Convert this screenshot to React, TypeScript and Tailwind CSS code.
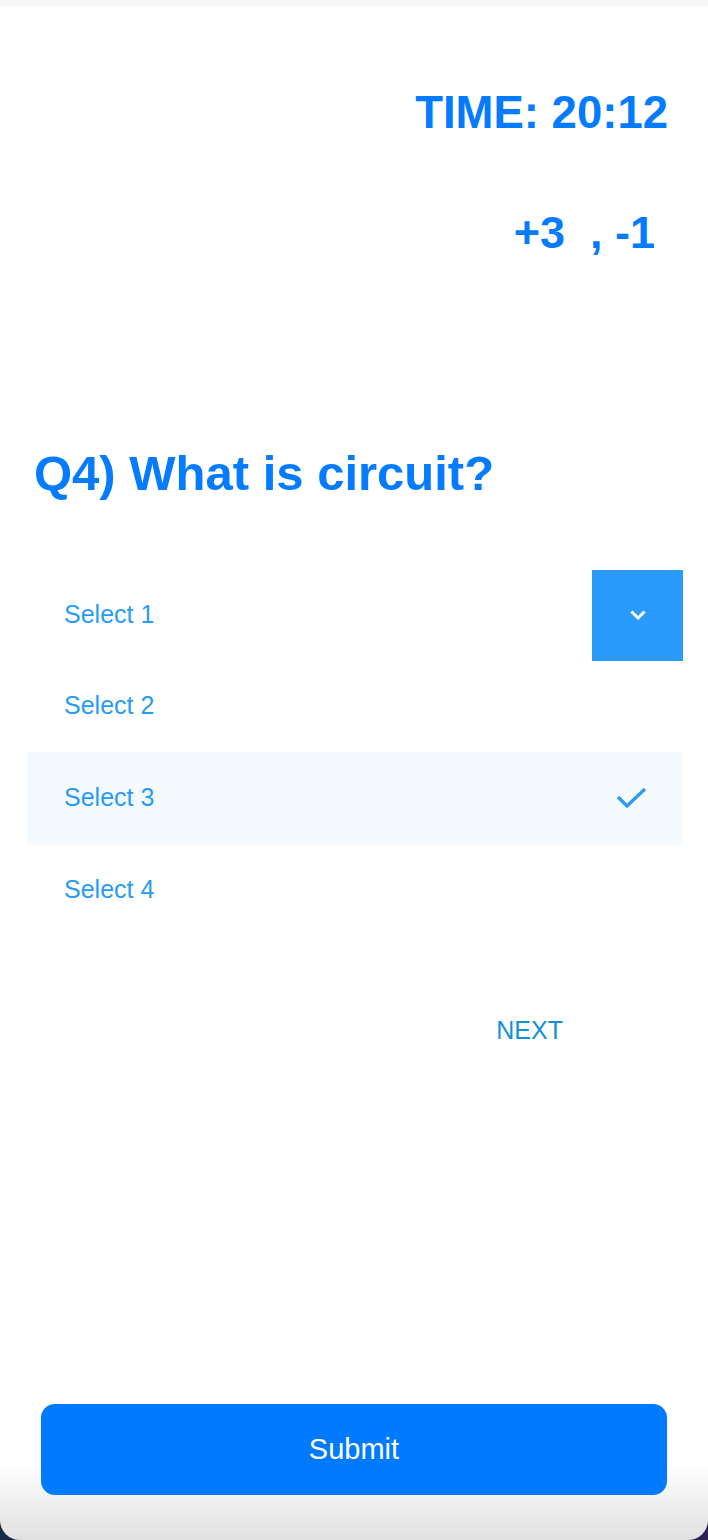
const options = ['Select 1', 'Select 2', 'Select 3', 'Select 4'];

function Chevron() {
  return (
    <svg width="16" height="12" viewBox="0 0 16 12" fill="none">
      <path d="M2.5 3.5 L8 9 L13.5 3.5" stroke="white" strokeWidth="3" strokeLinecap="square" />
    </svg>
  );
}

function Check() {
  return (
    <svg width="34" height="26" viewBox="0 0 34 26" fill="none">
      <path d="M3 12 L12 21 L30 4" stroke="#2a9bf5" strokeWidth="3.2" />
    </svg>
  );
}

export default function App() {
  return (
    <div className="w-[708px] h-[1540px] bg-gradient-to-r from-[#172a4a] to-[#2c2352] font-['Liberation_Sans',Arial,sans-serif]">
      <div className="flex flex-col h-full rounded-b-[20px] overflow-hidden bg-gradient-to-b from-white from-[95%] to-[#e1e1e1]">
        <div className="h-[6px] bg-[#f6f6f6]" />

        <div className="flex justify-end pr-[40px] mt-[84px]">
          <h1 className="text-[45.5px] leading-none font-bold text-[#057bff]">TIME: 20:12</h1>
        </div>

        <div className="flex justify-end pr-[53px] mt-[74px]">
          <p className="text-[45px] leading-none font-bold text-[#057bff] whitespace-pre">+3  , -1</p>
        </div>

        <h2 className="mt-[194px] pl-[34px] text-[49px] leading-none font-bold text-[#057bff]">
          Q4) What is circuit?
        </h2>

        <ul className="mt-[72px] mx-[27px] w-[656px]">
          {options.map((opt, i) => (
            <li
              key={opt}
              className={`flex items-center justify-between h-[91px] pl-[37px] ${i === 2 ? 'bg-[#f5faff] h-[93px]' : ''}`}
            >
              <span className="text-[25px] text-[#2a9bf5]">{opt}</span>
              {i === 0 && (
                <button className="w-[91px] h-[91px] bg-[#2a9bfd] flex items-center justify-center">
                  <Chevron />
                </button>
              )}
              {i === 2 && (
                <span className="mr-[34px] flex items-center">
                  <Check />
                </span>
              )}
            </li>
          ))}
        </ul>

        <div className="flex justify-end pr-[145px] mt-[82px]">
          <button className="text-[25px] leading-none text-[#1590d8]">NEXT</button>
        </div>

        <button className="mt-auto mb-[45px] mx-[41px] h-[91px] rounded-[14px] bg-[#007bff] text-white text-[29px]">
          Submit
        </button>
      </div>
    </div>
  );
}
